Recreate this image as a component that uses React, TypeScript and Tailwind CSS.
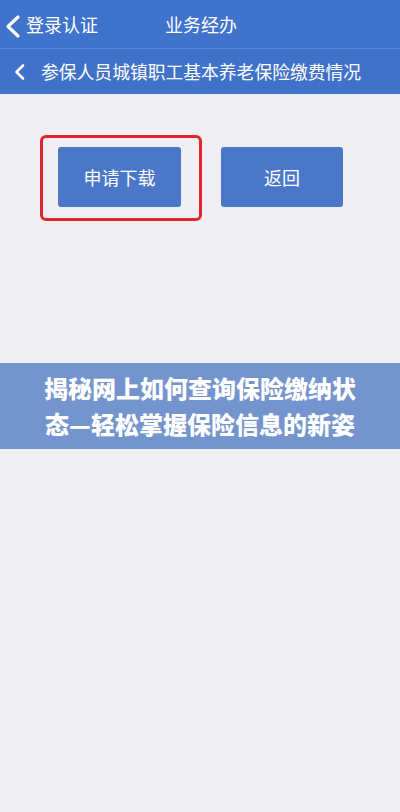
export default function App() {
  const font = { fontFamily: '"Noto Sans CJK SC", "Noto Sans", sans-serif' };
  return (
    <div className="w-[400px] h-[812px] bg-[#efeef3] flex flex-col" style={font}>
      <div className="h-[48px] bg-[#3f73cc] flex items-center text-white">
        <svg width="26" height="48" viewBox="0 0 26 48" className="shrink-0">
          <path d="M18 17 L8 26.5 L18 36" fill="none" stroke="white" strokeWidth="3.2" strokeLinecap="round" strokeLinejoin="round" />
        </svg>
        <span className="text-[18px] leading-none tracking-[0px]">登录认证</span>
        <span className="text-[18px] leading-none ml-[67px]">业务经办</span>
      </div>
      <div className="h-px bg-[#5b8ad6]" />
      <div className="h-[45px] bg-[#4172c9] flex items-center text-white">
        <svg width="41" height="45" viewBox="0 0 41 45" className="shrink-0">
          <path d="M23 16.5 L16.5 23 L23 29.5" fill="none" stroke="white" strokeWidth="2.6" strokeLinecap="round" strokeLinejoin="round" />
        </svg>
        <span className="text-[17.8px] leading-none">参保人员城镇职工基本养老保险缴费情况</span>
      </div>
      <div className="flex items-start pl-[40px] pt-[41px]">
        <div className="border-[3px] border-[#e0262a] rounded-[6px] pl-[15px] pr-[18px] pt-[9px] pb-[11px]">
          <div className="w-[123px] h-[60px] bg-[#4b77c9] rounded-[3px] flex items-center justify-center text-white text-[18px]">
            申请下载
          </div>
        </div>
        <div className="ml-[19px] mt-[12px] w-[122px] h-[60px] bg-[#4b77c9] rounded-[3px] flex items-center justify-center text-white text-[18px]">
          返回
        </div>
      </div>
      <div className="mt-[142px] h-[86px] bg-[#7494cd] flex flex-col items-center justify-center text-white font-black text-[24px] leading-[36px]">
        <div>揭秘网上如何查询保险缴纳状</div>
        <div>态—轻松掌握保险信息的新姿</div>
      </div>
    </div>
  );
}
